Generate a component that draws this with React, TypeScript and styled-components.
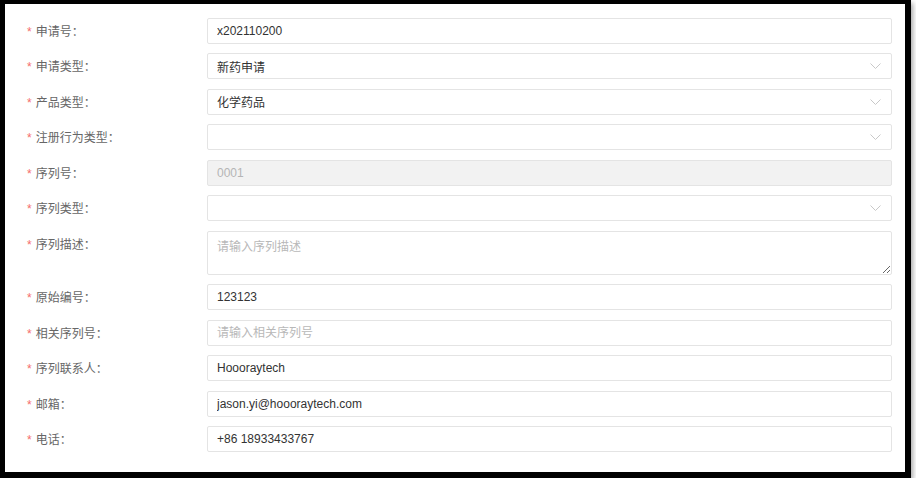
import styled, { createGlobalStyle } from 'styled-components';

type Field = {
  label: string;
  kind: 'input' | 'select' | 'textarea' | 'disabled';
  value?: string;
  placeholder?: string;
};

const fields: Field[] = [
  { label: '申请号', kind: 'input', value: 'x202110200' },
  { label: '申请类型', kind: 'select', value: '新药申请' },
  { label: '产品类型', kind: 'select', value: '化学药品' },
  { label: '注册行为类型', kind: 'select' },
  { label: '序列号', kind: 'disabled', value: '0001' },
  { label: '序列类型', kind: 'select' },
  { label: '序列描述', kind: 'textarea', placeholder: '请输入序列描述' },
  { label: '原始编号', kind: 'input', value: '123123' },
  { label: '相关序列号', kind: 'input', placeholder: '请输入相关序列号' },
  { label: '序列联系人', kind: 'input', value: 'Hoooraytech' },
  { label: '邮箱', kind: 'input', value: 'jason.yi@hoooraytech.com' },
  { label: '电话', kind: 'input', value: '+86 18933433767' },
];

const Chevron = () => (
  <svg width="11" height="6" viewBox="0 0 11 6" fill="none">
    <polyline points="0.5,0.5 5.5,5.5 10.5,0.5" stroke="#c8c8c8" strokeWidth="1" />
  </svg>
);

const App = () => {
  return (
    <>
      <GlobalStyle />
      <Frame>
        <Form>
          {fields.map((f) => (
            <Row key={f.label}>
              <Label>
                <Star>*</Star>
                {f.label}：
              </Label>
              {f.kind === 'textarea' ? (
                <TextArea placeholder={f.placeholder} />
              ) : f.kind === 'select' ? (
                <SelectBox>
                  <span>{f.value}</span>
                  <Chevron />
                </SelectBox>
              ) : (
                <Input
                  readOnly
                  $disabled={f.kind === 'disabled'}
                  value={f.value ?? ''}
                  placeholder={f.placeholder}
                />
              )}
            </Row>
          ))}
        </Form>
      </Frame>
    </>
  );
};

const GlobalStyle = createGlobalStyle`
  body {
    margin: 0;
    background: #fff;
    font-family: "Liberation Sans", "Noto Sans CJK SC", sans-serif;
  }
  * {
    box-sizing: border-box;
  }
`;

const Frame = styled.div`
  width: 911px;
  height: 478px;
  border-style: solid;
  border-color: #000;
  border-width: 4px 6px 6px 5px;
  background: #fff;
  box-shadow: 2px 3px 5px rgba(0, 0, 0, 0.35);
`;

const Form = styled.div`
  display: flex;
  flex-direction: column;
  gap: 9.5px;
  padding: 13.5px 13px 0 22px;
`;

const Row = styled.div`
  display: flex;
  align-items: flex-start;
`;

const Label = styled.div`
  width: 180px;
  flex-shrink: 0;
  height: 26px;
  line-height: 26px;
  font-size: 12px;
  color: #666;
  font-family: "Noto Sans CJK SC", "Liberation Sans", sans-serif;
`;

const Star = styled.span`
  color: #f56c6c;
  margin-right: 4px;
  font-family: "Liberation Sans", sans-serif;
`;

const fieldBase = `
  flex: 1;
  min-width: 0;
  border: 1px solid #e4e4e4;
  border-radius: 2px;
  font-size: 12px;
  color: #333;
  font-family: "Liberation Sans", "Noto Sans CJK SC", sans-serif;
  outline: none;
`;

const Input = styled.input<{ $disabled?: boolean }>`
  ${fieldBase}
  height: 26px;
  padding: 0 9px;
  background: ${(p) => (p.$disabled ? '#f2f2f2' : '#fff')};
  color: ${(p) => (p.$disabled ? '#b5b5b5' : '#333')};
  &::placeholder {
    color: #b8b8b8;
  }
`;

const SelectBox = styled.div`
  ${fieldBase}
  height: 26px;
  padding: 0 10px 0 9px;
  display: flex;
  align-items: center;
  justify-content: space-between;
  background: #fff;
  span {
    font-family: "Noto Sans CJK SC", sans-serif;
  }
`;

const TextArea = styled.textarea`
  ${fieldBase}
  height: 44px;
  padding: 5px 9px;
  resize: vertical;
  background: #fff;
  font-family: "Noto Sans CJK SC", "Liberation Sans", sans-serif;
  &::placeholder {
    color: #b8b8b8;
  }
`;

export default App;
